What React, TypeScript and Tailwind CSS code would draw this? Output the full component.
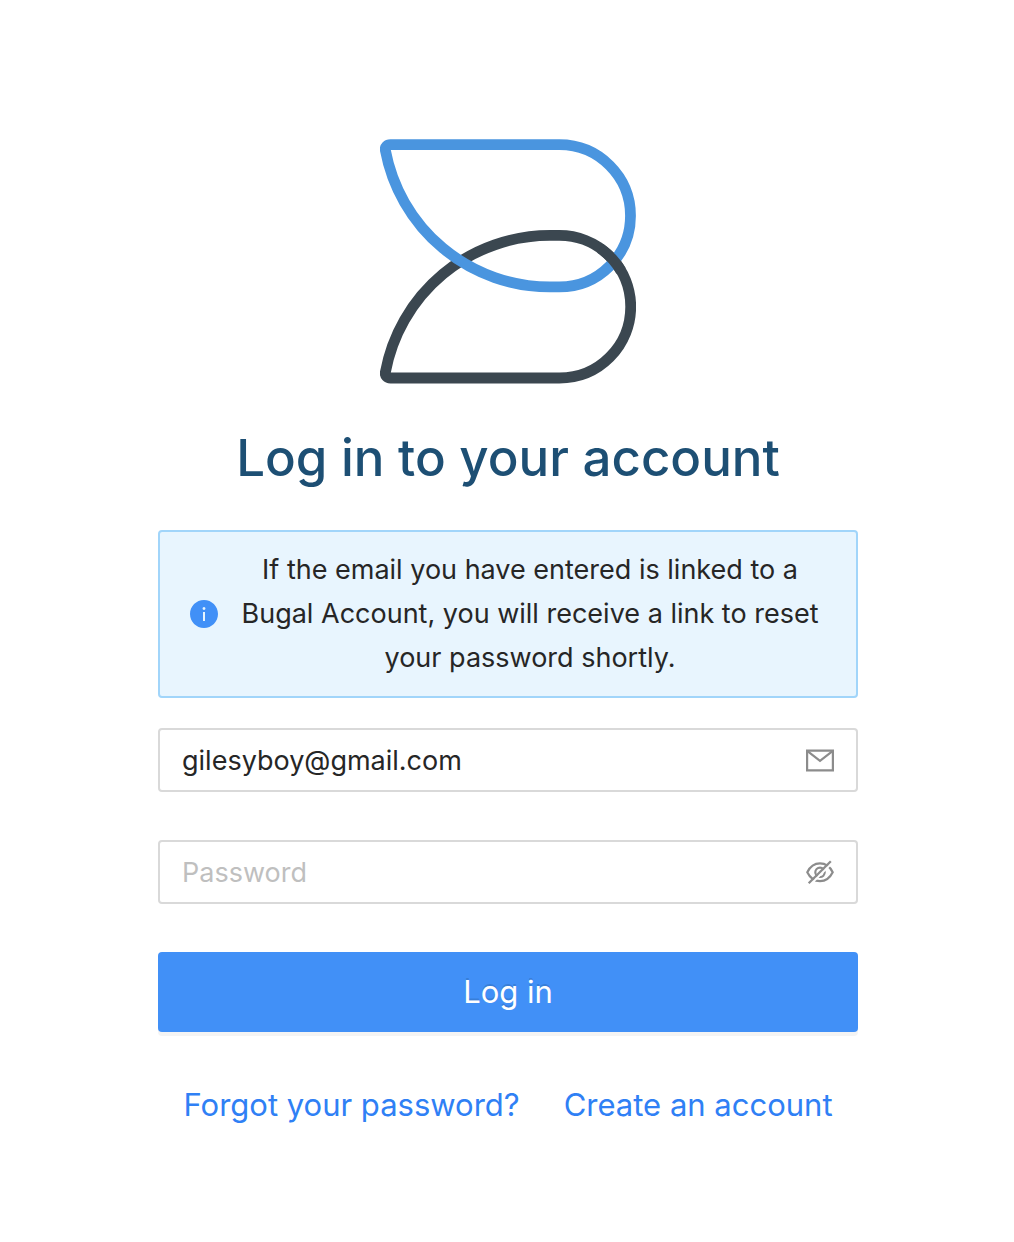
import { useState } from "react";
import { AiFillInfoCircle } from "react-icons/ai";

function Logo() {
  return (
    <svg viewBox="0 0 256 245" className="w-64" fill="none" strokeWidth="10.8" strokeLinejoin="round" role="img" aria-label="Bugal">
      <path stroke="#3b4750" d="M10.5 239H179.400A71.300 71.300 0 0 0 179.400 96.400H170A167.500 167.500 0 0 0 5.300 233.500C4.800 236.500 7 239 10.500 239Z" />
      <path stroke="#4a95df" d="M10.5 5.700H179.400A71.100 71.100 0 0 1 179.400 147.900H170A167.500 167.500 0 0 1 5.300 11C4.800 8 7 5.700 10.500 5.700Z" />
      <path stroke="#3b4750" d="M220.300 109.300A71.300 71.300 0 0 1 241.100 132" />
    </svg>
  );
}

function MailIcon() {
  return (
    <svg viewBox="0 0 32 32" className="size-8 shrink-0" fill="none" stroke="#8c8c8c" strokeWidth="2.2" aria-hidden="true">
      <path d="M3.100 6.600H28.900V26.400H3.100Z" />
      <path d="M3.500 7.200L16 16.800L28.500 7.200" />
    </svg>
  );
}

function HiddenEyeIcon() {
  return (
    <svg viewBox="0 0 32 32" className="size-8 shrink-0" fill="none" stroke="#8c8c8c" strokeWidth="2.200" aria-hidden="true">
      <path d="M3.300 16.300C6.200 10.300 10.500 7.400 16 7.400S25.800 10.300 28.700 16.300C25.800 22.300 21.500 25.200 16 25.200S6.200 22.300 3.300 16.300Z" />
      <circle cx="16" cy="16.300" r="4.700" />
      <path stroke="white" strokeWidth="2" d="M6.700 28.300L28.500 6.500" />
      <path strokeWidth="2.300" d="M4.700 27.300L26.800 5.200" />
    </svg>
  );
}

export default function App() {
  const [email, setEmail] = useState("gilesyboy@gmail.com");
  const [password, setPassword] = useState("");

  return (
    <main className="flex min-h-screen justify-center bg-white px-6 pt-[139px] pb-16 pl-[26px] font-['Inter',sans-serif] text-[#262626]">
      <form className="flex w-full max-w-[700px] flex-col items-center" onSubmit={(e) => e.preventDefault()}>
        <Logo />
        <h1 className="mt-[38px] text-center text-[51px] leading-[72px] font-medium whitespace-nowrap text-[#1d4f74]">Log in to your account</h1>
        <div role="status" className="mt-9 flex w-full items-center gap-4 rounded-[4px] border-2 border-[#a1d5fa] bg-[#e8f5fe] py-4 pr-8 pl-7">
          <AiFillInfoCircle className="size-8 shrink-0 text-[#4190f7]" />
          <p className="flex-1 text-center text-[27px] leading-[44px]">
            If the email you have entered is linked to a Bugal Account, you will receive a link to reset your password shortly.
          </p>
        </div>
        <label className="mt-[30px] flex h-16 w-full items-center rounded-[4px] border-2 border-[#d9d9d9] pr-5">
          <input type="email" aria-label="Email" value={email} onChange={(e) => setEmail(e.target.value)} className="h-full min-w-0 flex-1 px-[22px] text-[27px] outline-none" />
          <MailIcon />
        </label>
        <div className="mt-12 flex h-16 w-full items-center rounded-[4px] border-2 border-[#d9d9d9] pr-5">
          <input type="password" aria-label="Password" placeholder="Password" value={password} onChange={(e) => setPassword(e.target.value)} className="h-full min-w-0 flex-1 px-[22px] text-[27px] outline-none placeholder:text-[#bfbfbf]" />
          <button type="button" aria-label="Show password">
            <HiddenEyeIcon />
          </button>
        </div>
        <button type="submit" className="mt-12 h-20 w-full rounded-[4px] bg-[#4190f7] text-[31px] text-white shadow-[0_4px_0_rgba(0,0,0,0.045)] [text-shadow:0_-2px_0_rgba(0,0,0,0.12)]">Log in</button>
        <nav className="mt-12 flex gap-11 text-[31px] leading-[50px] whitespace-nowrap text-[#2f80f5]">
          <a href="#forgot">Forgot your password?</a>
          <a href="#create">Create an account</a>
        </nav>
      </form>
    </main>
  );
}
